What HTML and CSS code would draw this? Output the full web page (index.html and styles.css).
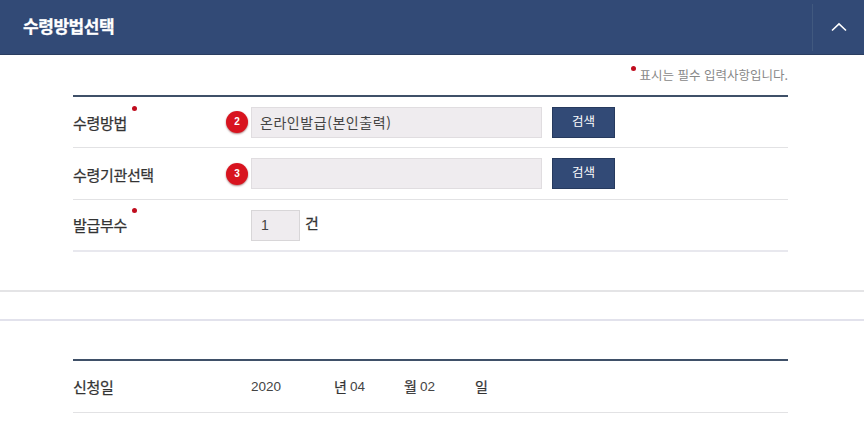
FILE: index.html
```html
<!DOCTYPE html>
<html lang="ko">
<head>
<meta charset="utf-8">
<title>수령방법선택</title>
<link rel="stylesheet" href="styles.css">
</head>
<body>
<header class="head">
  <h2 class="head-title">수령방법선택</h2>
  <button class="head-toggle" type="button" aria-label="접기">
    <svg width="16" height="10" viewBox="0 0 16 10"><path d="M1 8.5 L8 1.8 L15 8.5" fill="none" stroke="#fff" stroke-width="1.6"/></svg>
  </button>
</header>
<main class="section">
  <p class="note"><span class="dot note-dot"></span>표시는 필수 입력사항입니다.</p>
  <div class="table">
    <div class="row">
      <div class="label">수령방법<span class="dot label-dot"></span></div>
      <div class="value">
        <span class="badge">2</span>
        <div class="input wide">온라인발급(본인출력)</div>
        <button class="btn" type="button">검색</button>
      </div>
    </div>
    <div class="row">
      <div class="label">수령기관선택</div>
      <div class="value">
        <span class="badge">3</span>
        <div class="input wide"></div>
        <button class="btn" type="button">검색</button>
      </div>
    </div>
    <div class="row row-last">
      <div class="label">발급부수<span class="dot label-dot"></span></div>
      <div class="value">
        <div class="input count">1</div>
        <span class="unit">건</span>
      </div>
    </div>
  </div>
</main>
<div class="divider divider-a"></div>
<div class="divider divider-b"></div>
<section class="section">
  <div class="table table-date">
    <div class="row row-date">
      <div class="label">신청일</div>
      <div class="value date">
        <span class="num c-year">2020</span><span class="ko c-y">년</span><span class="num c-mon">04</span><span class="ko c-m">월</span><span class="num c-day">02</span><span class="ko">일</span>
      </div>
    </div>
  </div>
</section>
</body>
</html>
```
FILE: styles.css
```css
* { box-sizing: border-box; }
html, body { margin: 0; padding: 0; background: #fff; }
body {
  width: 864px;
  height: 443px;
  overflow: hidden;
  font-family: "Noto Sans CJK KR", "Liberation Sans", sans-serif;
  color: #333;
}
.head {
  height: 55px;
  background: #324a76;
  border-bottom: 1px solid #2a3d60;
  display: flex;
  align-items: center;
  justify-content: space-between;
}
.head-title {
  margin: 0 0 0 23px;
  font-size: 17px;
  line-height: 22px;
  font-weight: 700;
  letter-spacing: -0.45px;
  color: #fff;
  -webkit-text-stroke: 0.3px #fff;
  position: relative;
  top: -1px;
}
.head-toggle {
  width: 52px;
  height: 47px;
  margin-top: 8px;
  padding: 0;
  background: none;
  border: 0;
  border-left: 1px solid #41597f;
  display: flex;
  align-items: center;
  justify-content: center;
  position: relative;
  top: -4px;
}
.section { margin: 0 76px 0 73px; }
.note {
  margin: 0;
  height: 40px;
  padding-top: 10px;
  text-align: right;
  font-size: 12.5px;
  line-height: 20px;
  color: #888;
}
.dot {
  display: inline-block;
  width: 5px;
  height: 5px;
  border-radius: 50%;
  background: #c00d1e;
}
.note-dot { vertical-align: 9px; margin-right: 4px; }
.label-dot { position: absolute; top: -7px; margin-left: 5px; }
.table { border-top: 2px solid #3f5068; }
.row {
  display: flex;
  height: 52px;
  border-bottom: 1px solid #e2e2e4;
}
.row:first-child { height: 51px; }
.row-last { border-bottom: 2px solid #e8e8ee; }
.label {
  width: 178px;
  margin-top: 2px;
  font-size: 15px;
  line-height: 20px;
  font-weight: 400;
  color: #333;
  align-self: center;
  letter-spacing: -0.33px;
  position: relative;
  -webkit-text-stroke: 0.25px #333;
}
.row-last .label, .row-date .label { margin-top: 0; }
.label .label-dot { -webkit-text-stroke: 0; }
.value {
  display: flex;
  align-items: center;
  gap: 10px;
  position: relative;
  flex: 1;
}
.input {
  height: 31px;
  background: #efecef;
  border: 1px solid #e0dde0;
  font-size: 14px;
  line-height: 29px;
  color: #444;
}
.wide { width: 291px; padding-left: 8px; letter-spacing: 0.55px; }
.count {
  width: 49px;
  padding-left: 9px;
  font-family: "Liberation Sans", sans-serif;
  border-color: #d8d6d8;
}
.badge {
  position: absolute;
  left: -25px;
  top: 50%;
  transform: translateY(-50%);
  width: 22px;
  height: 22px;
  border-radius: 50%;
  background: #d8141f;
  box-shadow: 0 1px 2px rgba(90, 0, 0, .5);
  color: #fff;
  font: 700 10px/22px "Liberation Sans", sans-serif;
  text-align: center;
}
.btn {
  width: 63px;
  height: 31px;
  padding: 0 0 4px;
  background: #324a76;
  border: 1px solid #263a5e;
  color: #fff;
  font-family: inherit;
  font-size: 12.5px;
  line-height: 25px;
}
.unit { margin: -6px 0 0 -5px; font-size: 15px; color: #333; -webkit-text-stroke: 0.25px #333; }
.divider { height: 2px; }
.divider-a { background: #e4e4e6; margin-top: 38px; }
.divider-b { background: #e2e2ec; margin-top: 27px; }
.table-date { margin-top: 38px; }
.row.row-date { height: 52px; }
.date { gap: 0; font-size: 13px; }
.num { font-family: "Liberation Sans", sans-serif; font-size: 13.5px; color: #444; }
.ko { font-size: 14px; color: #333; -webkit-text-stroke: 0.25px #333; position: relative; top: -1px; }
.c-year { width: 83px; }
.c-y { width: 16px; }
.c-mon { width: 54px; }
.c-m { width: 16px; }
.c-day { width: 55px; }
```
